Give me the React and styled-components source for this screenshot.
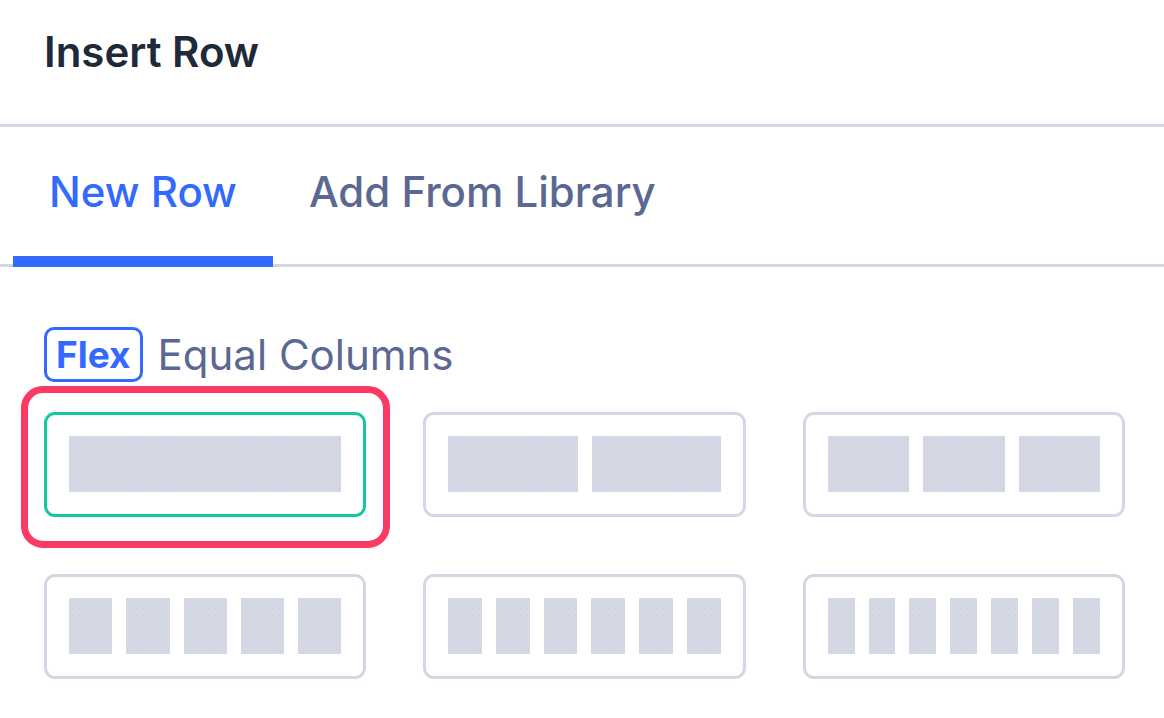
import React, { useState } from 'react';
import styled, { createGlobalStyle, css } from 'styled-components';

const GlobalStyle = createGlobalStyle`
  html, body {
    margin: 0;
    padding: 0;
    background: #ffffff;
  }
  body {
    font-family: Inter, "Noto Sans", sans-serif;
    -webkit-font-smoothing: antialiased;
  }
`;

const Panel = styled.div`
  width: 1164px;
  min-height: 718px;
  background: #ffffff;
  overflow: hidden;
`;

const Header = styled.div`
  display: flex;
  align-items: center;
  height: 127px;
  box-sizing: border-box;
  padding: 0 0 22px 44px;
  border-bottom: 3px solid #d4d7e3;
`;

const Title = styled.h1`
  margin: 0;
  font-size: 42px;
  font-weight: 600;
  color: #1e2939;
`;

const TabList = styled.div`
  display: flex;
  padding-left: 13px;
  height: 140px;
  box-shadow: inset 0 -3px 0 #d4d7e3;
`;

const Tab = styled.button`
  background: none;
  border: none;
  border-bottom: 11px solid transparent;
  padding: 0 36px;
  font-family: inherit;
  font-size: 42px;
  font-weight: 500;
  color: #5b6892;
  cursor: pointer;
  display: flex;
  align-items: center;
  ${({ $active }) =>
    $active &&
    css`
      color: #3369ff;
      border-bottom-color: #3369ff;
    `}
`;

const Section = styled.div`
  padding: 60px 39px 0 44px;
`;

const LabelRow = styled.div`
  display: flex;
  align-items: center;
  gap: 15px;
  margin-bottom: 30px;
`;

const Badge = styled.span`
  display: inline-flex;
  align-items: center;
  height: 55px;
  box-sizing: border-box;
  padding: 0 9px;
  border: 3px solid #3369ff;
  border-radius: 10px;
  color: #3369ff;
  font-size: 37px;
  font-weight: 700;
`;

const LabelText = styled.span`
  font-size: 42px;
  font-weight: 400;
  color: #5b6892;
`;

const Grid = styled.div`
  display: grid;
  grid-template-columns: repeat(3, 1fr);
  column-gap: 57px;
  row-gap: 57px;
`;

const Card = styled.div`
  position: relative;
  display: flex;
  gap: 14px;
  padding: 21px 22px 22px;
  border: 3px solid ${({ $selected }) => ($selected ? '#12c99b' : '#d4d7e3')};
  border-radius: 11px;
  cursor: pointer;
`;

const Block = styled.div`
  flex: 1;
  height: 56px;
  background-color: #d4d7e4;
  background-image: radial-gradient(rgba(184, 190, 212, 0.4) 0.6px, transparent 0.9px);
  background-size: 7px 7px;
`;

const Highlight = styled.span`
  position: absolute;
  top: -29px;
  left: -26px;
  right: -27px;
  bottom: -34px;
  border: 7px solid #fb3a63;
  border-radius: 22px;
  pointer-events: none;
`;

const layouts = [1, 2, 3, 5, 6, 7];

export default function App() {
  const [tab, setTab] = useState('new');
  const [selected, setSelected] = useState(1);

  return (
    <Panel>
      <GlobalStyle />
      <Header>
        <Title>Insert Row</Title>
      </Header>
      <TabList>
        <Tab $active={tab === 'new'} onClick={() => setTab('new')}>
          New Row
        </Tab>
        <Tab $active={tab === 'library'} onClick={() => setTab('library')}>
          Add From Library
        </Tab>
      </TabList>
      <Section>
        <LabelRow>
          <Badge>Flex</Badge>
          <LabelText>Equal Columns</LabelText>
        </LabelRow>
        <Grid>
          {layouts.map((count) => (
            <Card key={count} $selected={selected === count} onClick={() => setSelected(count)}>
              {Array.from({ length: count }).map((_, i) => (
                <Block key={i} />
              ))}
              {selected === count && <Highlight />}
            </Card>
          ))}
        </Grid>
      </Section>
    </Panel>
  );
}
